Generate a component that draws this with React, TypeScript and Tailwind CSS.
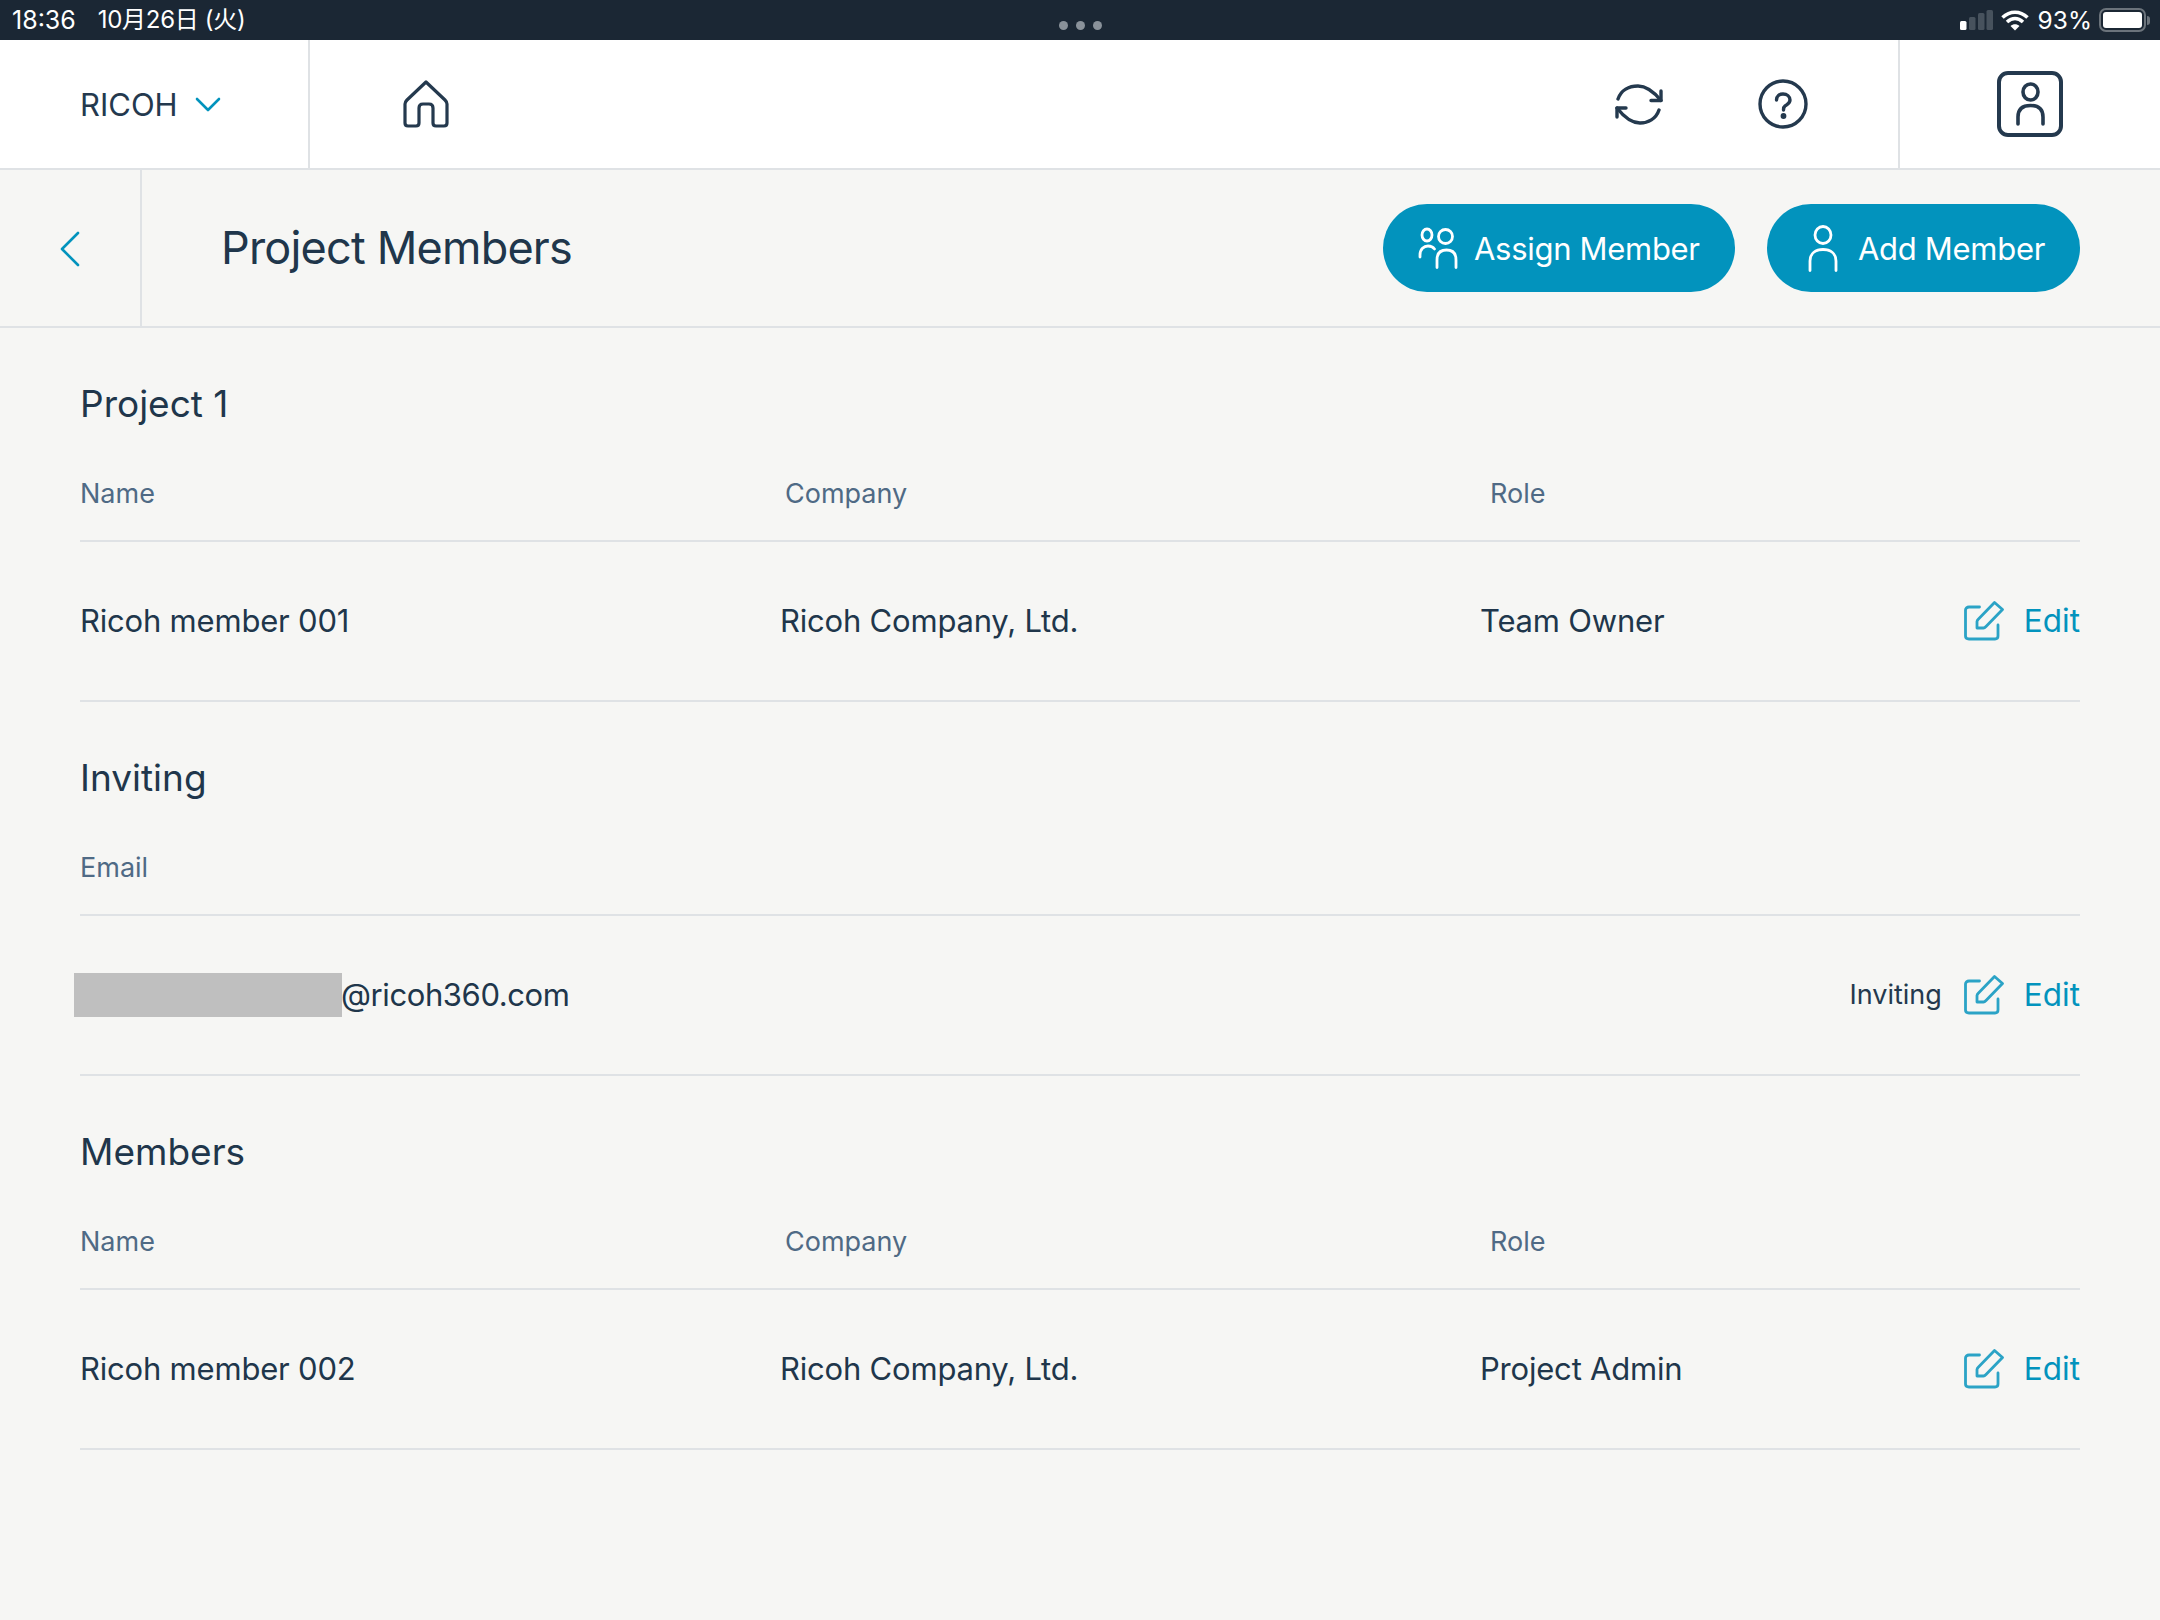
import React from "react";

const sans = "font-['Inter','Noto_Sans_CJK_JP',sans-serif]";

const HomeIcon = () => (
	<svg width="46" height="48" viewBox="0 0 46 48" fill="none" stroke="#24394e" strokeWidth="3.2" strokeLinejoin="round" strokeLinecap="round">
		<path d="M23 2 L42 20 C43 21 44 22 44 24 V43 C44 45 43 46 41 46 H33 C31 46 30 45 30 43 V28 C30 25 28 24 26 24 H20 C18 24 16 25 16 28 V43 C16 45 15 46 13 46 H5 C3 46 2 45 2 43 V24 C2 22 3 21 4 20 Z" />
	</svg>
);

const SyncIcon = () => (
	<svg width="48" height="41" viewBox="0 0 48 41" fill="none" stroke="#24394e" strokeWidth="3.4" strokeLinecap="round" strokeLinejoin="round">
		<path d="M3 15 C6 6 14 2 23 2 C32 2 39 8 46 16.5" />
		<path d="M46 7 V16.5 H36" />
		<path d="M44 26 C41 35 33 39 25 39 C16 39 9 33 2 24" />
		<path d="M2 33 V24 H11" />
	</svg>
);

const HelpIcon = () => (
	<svg width="50" height="50" viewBox="0 0 50 50" fill="none" stroke="#24394e" strokeWidth="3.4" strokeLinecap="round">
		<circle cx="25" cy="25" r="23" />
		<path d="M18.5 21 C18.5 17 21.5 15 25 15 C29 15 32 17.5 32 21 C32 24.5 29 25.5 27 27 C25.5 28 25.5 29 25.5 31" />
		<circle cx="25.5" cy="37" r="1.2" fill="#24394e" />
	</svg>
);

const PersonIcon = () => (
	<svg width="30" height="47" viewBox="0 0 30 47" fill="none" stroke="#fff" strokeWidth="2.8" strokeLinecap="round">
		<ellipse cx="15" cy="10" rx="8" ry="8.5" />
		<path d="M2 45.5 V36 C2 28 8 24.5 15 24.5 C22 24.5 28 28 28 36 V45.5" />
	</svg>
);

const BadgeIcon = () => (
	<svg width="66" height="66" viewBox="0 0 66 66" fill="none" stroke="#24394e" strokeLinecap="round">
		<rect x="2" y="2" width="62" height="62" rx="9" strokeWidth="4" />
		<ellipse cx="33.5" cy="21" rx="7.5" ry="8" strokeWidth="3.6" />
		<path d="M21 53 V46 C21 38 26 34.5 33.5 34.5 C41 34.5 46 38 46 46 V53" strokeWidth="3.6" />
	</svg>
);

const GroupIcon = () => (
	<svg width="40" height="42" viewBox="0 0 40 42" fill="none" stroke="#fff" strokeWidth="2.8" strokeLinecap="round">
		<ellipse cx="9" cy="8" rx="5" ry="6" />
		<circle cx="27.5" cy="9.5" r="7" />
		<path d="M2 30 V28 C2 22 6 19 10 19 C12.5 19 15 20 16.5 22" />
		<path d="M19 40.5 V33 C19 26 23 23 28.5 23 C34 23 38 26 38 33 V40.5" />
	</svg>
);

const EditIcon = () => (
	<svg width="40" height="40" viewBox="0 0 40 40" fill="none" stroke="#2ba3c6" strokeWidth="2.8" strokeLinecap="round" strokeLinejoin="round">
		<path d="M15.5 6 H5 C3 6 1.5 7 1.5 9 V35 C1.5 37 3 38 5 38 H31 C33 38 34 37 34 35 V24" />
		<path d="M30.5 1.5 L38.5 8.5 L22 25.5 C21 26.5 20.5 27 19.5 27 H13 V20.5 C13 19.5 13.5 19 14.5 18 Z" />
	</svg>
);

const Btn = ({ icon, label, box }: { icon: React.ReactNode; label: string; box: string }) => (
	<button className={`${box} h-[88px] rounded-full bg-[#0293bd] flex items-center text-white text-[31px] tracking-[-0.3px] leading-none`}>
		{icon}
		<span>{label}</span>
	</button>
);

const Edit = ({ status }: { status?: string }) => (
	<div className="flex items-center ml-auto">
		{status && <span className="text-[27px] tracking-normal text-[#24394e] mr-[22px]">{status}</span>}
		<EditIcon />
		<span className="ml-[20px] text-[31.5px] tracking-normal text-[#0293bd]">Edit</span>
	</div>
);

const Section = ({ title, children }: { title: string; children: React.ReactNode }) => (
	<section className="px-[80px]">
		<h2 className="mt-[49px] h-[52px] flex items-center text-[37px] leading-none text-[#20364b]">{title}</h2>
		{children}
	</section>
);

const HeadRow = ({ cols }: { cols: string[] }) => (
	<div className="flex h-[113px] pt-[20px] items-center border-b-2 border-[#dfe2e5] text-[27px] text-[#4f6a85]">
		{cols.map((c) => (
			<div key={c} className="w-[705px] shrink-0">{c}</div>
		))}
	</div>
);

const MemberRow = ({ name, company, role }: { name: string; company: string; role: string }) => (
	<div className="flex h-[160px] items-center border-b-2 border-[#dfe2e5] text-[31px] tracking-[-0.2px] text-[#20364b]">
		<div className="w-[700px]">{name}</div>
		<div className="w-[700px]">{company}</div>
		<div>{role}</div>
		<Edit />
	</div>
);

export default function App() {
	return (
		<div className={`${sans} w-[2160px] h-[1620px] bg-[#f6f6f4] overflow-hidden`}>
			<div className="h-[40px] bg-[#1b2734] flex items-center justify-between pl-[12px] pr-[10px] text-white text-[24px] leading-none relative">
				<div className="flex items-center gap-[22px]">
					<span className="text-[25px]">18:36</span>
					<span className="tracking-[-0.3px]">10月26日 (火)</span>
				</div>
				<div className="absolute left-[1059px] top-[21px] flex gap-[8px]">
					<span className="w-[9px] h-[9px] rounded-full bg-[#8a929a]" />
					<span className="w-[9px] h-[9px] rounded-full bg-[#8a929a]" />
					<span className="w-[9px] h-[9px] rounded-full bg-[#8a929a]" />
				</div>
				<div className="flex items-center">
					<svg width="33" height="20" viewBox="0 0 33 20">
						<rect x="0" y="11" width="6.5" height="9" rx="1.5" fill="#fff" />
						<rect x="9" y="7" width="6.5" height="13" rx="1.5" fill="#47525d" />
						<rect x="18" y="3" width="6.5" height="17" rx="1.5" fill="#47525d" />
						<rect x="26.5" y="0" width="6.5" height="20" rx="1.5" fill="#47525d" />
					</svg>
					<svg className="ml-[8px]" width="28" height="21" viewBox="0 0 28 21" fill="none" stroke="#fff" strokeWidth="3.6" strokeLinecap="butt">
						<path d="M1.5 7.5 C9 0.5 19 0.5 26.5 7.5" />
						<path d="M6 12 C11 7.5 17 7.5 22 12" />
						<path d="M14 20.5 L9.5 16 C12 13.8 16 13.8 18.5 16 Z" fill="#fff" stroke="none" />
					</svg>
					<span className="ml-[9px] text-[24.5px]">93%</span>
					<div className="flex items-center ml-[7px]">
						<div className="w-[47px] h-[24px] rounded-[7px] border-2 border-[#6b737b] p-[2px]">
							<div className="w-full h-full bg-white rounded-[3px]" />
						</div>
						<div className="w-[3px] h-[9px] ml-[1px] rounded-r-full bg-[#6b737b]" />
					</div>
				</div>
			</div>

			<header className="h-[130px] bg-white border-b-2 border-[#dfe2e5] flex text-[#24394e]">
				<div className="w-[310px] border-r-2 border-[#dfe2e5] flex items-center pl-[80px] gap-[17px]">
					<span className="text-[31px] leading-none">RICOH</span>
					<svg width="26" height="15" viewBox="0 0 26 15" fill="none" stroke="#0293bd" strokeWidth="2.6" strokeLinecap="round" strokeLinejoin="round">
						<path d="M2 2 L13 13 L24 2" />
					</svg>
				</div>
				<div className="pl-[93px] flex items-center">
					<HomeIcon />
				</div>
				<div className="ml-auto flex items-center gap-[95px] pr-[90px] border-r-2 border-[#dfe2e5]">
					<SyncIcon />
					<HelpIcon />
				</div>
				<div className="w-[260px] flex items-center justify-center">
					<BadgeIcon />
				</div>
			</header>

			<div className="h-[158px] border-b-2 border-[#dfe2e5] flex items-center">
				<div className="w-[142px] h-full border-r-2 border-[#dfe2e5] flex items-center pl-[60px]">
					<svg className="mt-[2px]" width="20" height="36" viewBox="0 0 20 36" fill="none" stroke="#0293bd" strokeWidth="2.6" strokeLinecap="round" strokeLinejoin="round">
						<path d="M18 2 L2 18 L18 34" />
					</svg>
				</div>
				<h1 className="ml-[79px] mb-[2px] text-[45px] tracking-[-0.8px] leading-none text-[#20364b]">Project Members</h1>
				<div className="ml-auto pr-[80px] flex gap-[32px]">
					<Btn box="w-[352px] pl-[35px] gap-[16px]" icon={<GroupIcon />} label="Assign Member" />
					<Btn box="w-[313px] pl-[41px] gap-[20px]" icon={<PersonIcon />} label="Add Member" />
				</div>
			</div>

			<Section title="Project 1">
				<HeadRow cols={["Name", "Company", "Role"]} />
				<MemberRow name="Ricoh member 001" company="Ricoh Company, Ltd." role="Team Owner" />
			</Section>

			<Section title="Inviting">
				<HeadRow cols={["Email"]} />
				<div className="flex h-[160px] items-center border-b-2 border-[#dfe2e5] text-[31px] text-[#20364b]">
					<span className="w-[268px] h-[44px] -ml-[6px] bg-[#bfbfbf]" />
					<span className="-ml-[1px] tracking-[-0.4px]">@ricoh360.com</span>
					<Edit status="Inviting" />
				</div>
			</Section>

			<Section title="Members">
				<HeadRow cols={["Name", "Company", "Role"]} />
				<MemberRow name="Ricoh member 002" company="Ricoh Company, Ltd." role="Project Admin" />
			</Section>
		</div>
	);
}
